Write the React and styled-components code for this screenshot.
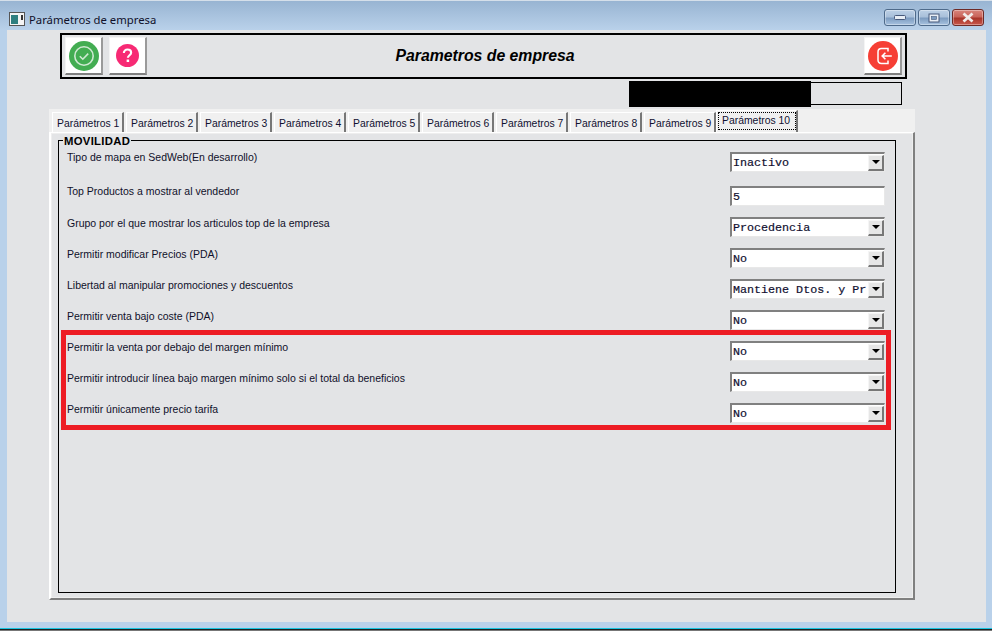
import styled, { createGlobalStyle } from "styled-components";

const GlobalStyle = createGlobalStyle`
  html, body {
    margin: 0;
    padding: 0;
    height: 631px;
    overflow: hidden;
    background: #b9d1ea;
    font-family: "Liberation Sans", Arial, sans-serif;
  }
`;

const Frame = styled.div`
  width: 992px;
  height: 631px;
  box-sizing: border-box;
  display: flex;
  flex-direction: column;
  background: #b9d1ea;
  border-bottom: 1px solid #777;
  box-shadow: inset 0 -1px 0 #222, inset 0 -2px 0 #17c4e0;
`;

const TitleBar = styled.div`
  height: 30px;
  flex: none;
  display: flex;
  align-items: flex-start;
  box-sizing: border-box;
  padding: 8px 8px 0 9px;
  background: linear-gradient(#98b4d2, #b9d1ea);
  border-top: 1px solid #d5dfea;
`;

const TitleIcon = styled.div`
  height: 17px;
  display: flex;
  align-items: flex-end;
`;

const TitleText = styled.span`
  margin: 2px 0 0 4px;
  font-family: "Noto Sans", "Liberation Sans", sans-serif;
  font-size: 11.3px;
  line-height: 17px;
  color: #10102a;
  flex: 1;
`;

const WindowButton = styled.div`
  width: 32px;
  height: 17px;
  box-sizing: border-box;
  margin-left: 2px;
  border: 1px solid ${(p) => (p.$close ? "#6e2a26" : "#4e6a8a")};
  border-radius: 3px;
  display: flex;
  align-items: center;
  justify-content: center;
  background: ${(p) =>
    p.$close
      ? "linear-gradient(#d8857c 0%, #c9645a 45%, #a8352a 55%, #c9584c 100%)"
      : "linear-gradient(#bcd0e6 0%, #a9c0da 45%, #7d9cc0 55%, #a8c3e0 100%)"};
  box-shadow: inset 0 0 0 1px rgba(255, 255, 255, 0.35);
`;

const Client = styled.div`
  width: 979px;
  height: 592px;
  margin-left: 7px;
  box-sizing: border-box;
  background: #e3e4e6;
  padding: 3px 0 0 42px;
`;

const Toolbar = styled.div`
  width: 847px;
  height: 46px;
  margin-left: 11px;
  box-sizing: border-box;
  border: 2px solid #000;
  padding: 2px 3px;
  display: flex;
  align-items: center;
  gap: 6px;
`;

const ToolButton = styled.div`
  width: 38px;
  height: 38px;
  box-sizing: border-box;
  background: #fff;
  border-top: 1px solid #f4f4f4;
  border-left: 1px solid #f4f4f4;
  border-right: 2px solid #9a9a9a;
  border-bottom: 2px solid #808080;
  display: flex;
  align-items: center;
  justify-content: center;
`;

const ToolbarTitle = styled.h1`
  flex: 1;
  margin: 0;
  padding-right: 41px;
  text-align: center;
  font-size: 15.8px;
  font-weight: bold;
  font-style: italic;
  color: #000;
`;

const StatusRow = styled.div`
  height: 30px;
  margin-left: 580px;
  display: flex;
  align-items: flex-start;
`;

const StatusBox = styled.div`
  width: 273px;
  height: 23px;
  margin-top: 3px;
  box-sizing: border-box;
  border: 1px solid #000;
  position: relative;
`;

const Redaction = styled.div`
  position: absolute;
  left: -1px;
  top: -2px;
  width: 182px;
  height: 26px;
  background: #000;
`;

const TabPanel = styled.div`
  width: 866px;
  height: 491px;
  display: flex;
  flex-direction: column;
`;

const TabStrip = styled.div`
  height: 23px;
  flex: none;
  box-sizing: border-box;
  padding: 1px 0 0 3px;
  display: flex;
  align-items: flex-end;
  background: #f0f0f0;
`;

const Tab = styled.div`
  height: ${(p) => (p.$active ? "22px" : "20px")};
  width: ${(p) => (p.$active ? "82px" : "72px")};
  margin-right: 2px;
  margin-left: ${(p) => (p.$active ? "-2px" : "0")};
  box-sizing: border-box;
  display: flex;
  align-items: ${(p) => (p.$active ? "flex-start" : "center")};
  padding: ${(p) => (p.$active ? "1px 0 0 1px" : "1px 0 0 4px")};
  font-size: 10.4px;
  color: #101030;
  white-space: nowrap;
  background: #f0f0f0;
  border-left: 1px solid #fff;
  border-top: 1px solid #fff;
  border-right: 2px solid #777;
`;

const FocusLabel = styled.span`
  flex: 1;
  height: 18px;
  box-sizing: border-box;
  padding-left: 4px;
  line-height: 17px;
  outline: 1px dotted #000;
  outline-offset: -1px;
`;

const TabBody = styled.div`
  flex: 1;
  box-sizing: border-box;
  padding: 7px 17px 5px 7px;
  border-top: 1px solid #fff;
  border-left: 2px solid #fff;
  border-right: 2px solid #808080;
  border-bottom: 2px solid #808080;
  box-shadow: inset 0 0 0 1px #eeeeee;
  display: flex;
`;

const GroupBox = styled.div`
  flex: 1;
  position: relative;
  box-sizing: border-box;
  padding: 11px 10px 0 8px;
  border: 1px solid #000;
`;

const Legend = styled.span`
  position: absolute;
  left: 4px;
  top: -5px;
  padding: 0 1px;
  background: #e3e4e6;
  font-size: 11.3px;
  line-height: 11px;
  font-weight: bold;
  letter-spacing: 0.3px;
  color: #000;
`;

const Row = styled.div`
  height: 31px;
  display: flex;
  align-items: flex-start;
  justify-content: space-between;
  margin-bottom: ${(p) => p.$after || 0}px;
`;

const Label = styled.span`
  margin-top: ${(p) => (p.$lift ? "-1px" : "0")};
  font-size: 10.5px;
  line-height: 13px;
  color: #10102a;
`;

const Control = styled.div`
  width: 155px;
  height: 20px;
  box-sizing: border-box;
  background: #fff;
  border-top: 2px solid #808080;
  border-left: 2px solid #808080;
  border-bottom: 1px solid #e8e8e8;
  border-right: 1px solid #e8e8e8;
  display: flex;
  align-items: center;
  padding-left: 1px;
  font-family: "Liberation Mono", "Courier New", monospace;
  font-size: 11.7px;
  color: #101030;
  -webkit-text-stroke: 0.2px #101030;
  overflow: hidden;
  white-space: pre;
`;

const ControlText = styled.span`
  flex: 1;
`;

const Arrow = styled.div`
  width: 16px;
  height: 16px;
  flex: none;
  box-sizing: border-box;
  background: #e6e6e6;
  border-top: 1px solid #f5f5f5;
  border-left: 1px solid #f5f5f5;
  border-right: 2px solid #777;
  border-bottom: 2px solid #777;
  display: flex;
  align-items: center;
  justify-content: center;

  &::after {
    content: "";
    border-left: 4px solid transparent;
    border-right: 4px solid transparent;
    border-top: 4px solid #000;
  }
`;

const Highlighted = styled.div`
  position: relative;

  &::after {
    content: "";
    position: absolute;
    left: -6px;
    right: -6px;
    top: -11px;
    height: 100px;
    box-sizing: border-box;
    border: 5px solid #ed1c24;
  }
`;

const Select = ({ value }) => (
  <Control>
    <ControlText>{value}</ControlText>
    <Arrow />
  </Control>
);

const CheckIcon = () => (
  <svg width="30" height="30" viewBox="0 0 30 30">
    <circle cx="15" cy="15" r="15" fill="#43ad52" />
    <circle cx="15" cy="15" r="9.2" fill="none" stroke="#cfe9d2" strokeWidth="1.6" />
    <path d="M10.8 15.2l3 3 5.4-5.6" fill="none" stroke="#cfe9d2" strokeWidth="1.6" />
  </svg>
);

const HelpIcon = () => (
  <svg width="23" height="23" viewBox="0 0 24 24">
    <circle cx="12" cy="12" r="12" fill="#f72a74" />
    <path
      d="M8.2 9.4c0-2.4 1.7-3.6 3.8-3.6s3.8 1.2 3.8 3.2c0 2.7-3.4 2.7-3.4 5.4"
      fill="none"
      stroke="#fff"
      strokeWidth="2.2"
    />
    <rect x="11.1" y="16.2" width="2.6" height="2.6" fill="#fff" />
  </svg>
);

const ExitIcon = () => (
  <svg width="30" height="30" viewBox="0 0 30 30">
    <circle cx="15" cy="15" r="15" fill="#f63f35" />
    <path
      d="M20 10.5v-3h-6.5c-2.4 0-3.5 1.2-3.5 3.4v8.2c0 2.2 1.1 3.4 3.5 3.4H20v-3"
      fill="none"
      stroke="#fff"
      strokeWidth="1.5"
    />
    <path d="M14.2 15h9.6M17.4 11.8L14.2 15l3.2 3.2" fill="none" stroke="#fff" strokeWidth="1.6" />
  </svg>
);

const AppIcon = () => (
  <svg width="16" height="14" viewBox="0 0 16 14">
    <rect x="0.5" y="0.5" width="15" height="13" fill="#f4f4f4" stroke="#555" />
    <rect x="2" y="3" width="7" height="9" fill="#2f7f80" />
    <rect x="12" y="3" width="2" height="5" fill="#333" />
  </svg>
);

const tabs = [1, 2, 3, 4, 5, 6, 7, 8, 9];

const App = () => (
  <>
    <GlobalStyle />
    <Frame>
      <TitleBar>
        <TitleIcon>
          <AppIcon />
        </TitleIcon>
        <TitleText>Parámetros de empresa</TitleText>
        <WindowButton>
          <svg width="12" height="6" viewBox="0 0 12 6">
            <rect x="0.5" y="0.5" width="11" height="4" rx="1" fill="#e8eef5" stroke="#47597a" />
          </svg>
        </WindowButton>
        <WindowButton>
          <svg width="12" height="10" viewBox="0 0 12 10">
            <rect x="1" y="1" width="10" height="8" fill="#e8eef5" stroke="#47597a" />
            <rect x="3.5" y="3.5" width="5" height="3" fill="#7d9cc0" stroke="#47597a" strokeWidth="0.6" />
          </svg>
        </WindowButton>
        <WindowButton $close>
          <svg width="14" height="11" viewBox="0 0 14 11">
            <path d="M2.5 1.5l9 8M11.5 1.5l-9 8" stroke="#f1ecea" strokeWidth="2.8" />
          </svg>
        </WindowButton>
      </TitleBar>
      <Client>
        <Toolbar>
          <ToolButton>
            <CheckIcon />
          </ToolButton>
          <ToolButton>
            <HelpIcon />
          </ToolButton>
          <ToolbarTitle>Parametros de empresa</ToolbarTitle>
          <ToolButton>
            <ExitIcon />
          </ToolButton>
        </Toolbar>
        <StatusRow>
          <StatusBox>
            <Redaction />
          </StatusBox>
        </StatusRow>
        <TabPanel>
          <TabStrip>
            {tabs.map((n) => (
              <Tab key={n}>Parámetros {n}</Tab>
            ))}
            <Tab $active>
              <FocusLabel>Parámetros 10</FocusLabel>
            </Tab>
          </TabStrip>
          <TabBody>
            <GroupBox>
              <Legend>MOVILIDAD</Legend>
              <Row $after={3}>
                <Label $lift>Tipo de mapa en SedWeb(En desarrollo)</Label>
                <Select value="Inactivo" />
              </Row>
              <Row>
                <Label $lift>Top Productos a mostrar al vendedor</Label>
                <Control>5</Control>
              </Row>
              <Row>
                <Label>Grupo por el que mostrar los articulos top de la empresa</Label>
                <Select value="Procedencia" />
              </Row>
              <Row>
                <Label>Permitir modificar Precios (PDA)</Label>
                <Select value="No" />
              </Row>
              <Row>
                <Label>Libertad al manipular promociones y descuentos</Label>
                <Select value="Mantiene Dtos. y Pr" />
              </Row>
              <Row>
                <Label>Permitir venta bajo coste (PDA)</Label>
                <Select value="No" />
              </Row>
              <Highlighted>
                <Row>
                  <Label>Permitir la venta por debajo del margen mínimo</Label>
                  <Select value="No" />
                </Row>
                <Row>
                  <Label>Permitir introducir línea bajo margen mínimo solo si el total da beneficios</Label>
                  <Select value="No" />
                </Row>
                <Row>
                  <Label>Permitir únicamente precio tarifa</Label>
                  <Select value="No" />
                </Row>
              </Highlighted>
            </GroupBox>
          </TabBody>
        </TabPanel>
      </Client>
    </Frame>
  </>
);

export default App;
